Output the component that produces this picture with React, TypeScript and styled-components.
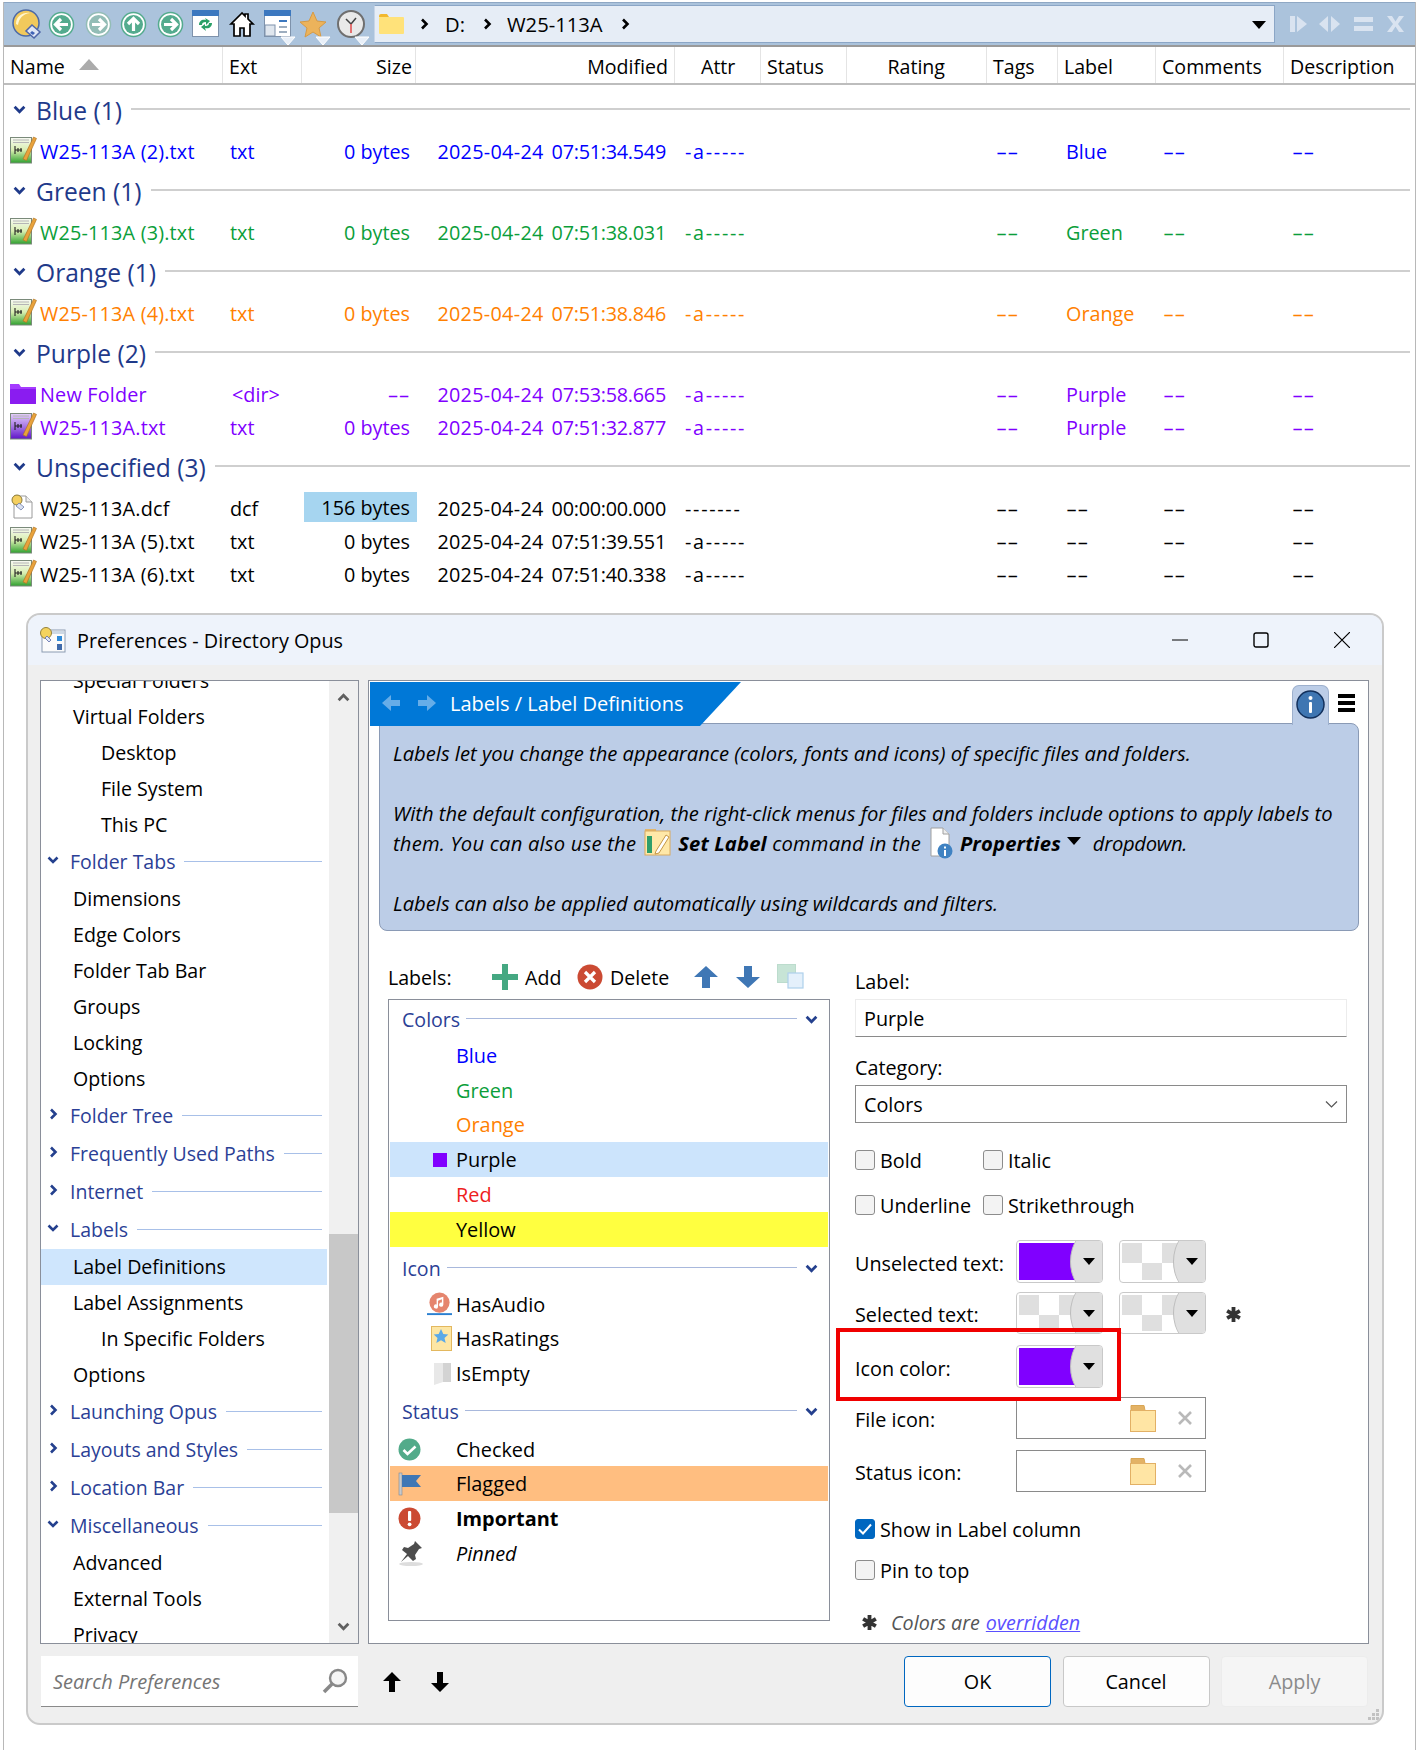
import React from "react";
import styled, { createGlobalStyle } from "styled-components";

const FONT = `"Open Sans", "Noto Sans", sans-serif`;

const Global = createGlobalStyle`
  html, body { margin: 0; padding: 0; background: #fff; }
  * { box-sizing: border-box; }
  body { font-family: ${FONT}; font-size: 19.8px; color: #000; }
`;

const COLS = "219px 79px 114px 259px 86px 86px 140px 71px 98px 128px 131px";

const Page = styled.div`
  width: 1421px;
  height: 1750px;
  padding: 2px 5px 0 3px;
  background: #fff;
`;
const Lister = styled.div`
  height: 1748px;
  border-left: 1px solid #b8b8b8;
  border-right: 1px solid #b8b8b8;
`;
const Toolbar = styled.div`
  height: 45px;
  background: #abc3dc;
  border-top: 1px solid #8fa8c4;
  border-bottom: 2px solid #9a9a9a;
  display: flex;
  align-items: center;
`;
const ToolIcons = styled.div`
  width: 370px;
  height: 100%;
  flex: none;
`;
const ArtSvg = styled.svg`
  display: block;
`;
const PathBox = styled.div`
  width: 901px;
  height: 38px;
  flex: none;
  background: #e6edf6;
  border: 1px solid #8ba6c6;
  border-left-color: #c8d6e8;
  display: flex;
  align-items: center;
  padding-left: 4px;
  position: relative;
`;
const PathText = styled.span`
  font-size: 20.2px;
  line-height: 1;
`;
const PathChevron = styled.span<{ $l: number; $r: number }>`
  display: flex;
  align-items: center;
  margin: 0 ${(p) => p.$r}px 0 ${(p) => p.$l}px;
`;
const PathDrop = styled.span`
  position: absolute;
  right: 8px;
  top: 15px;
  width: 0;
  height: 0;
  border-left: 7px solid transparent;
  border-right: 7px solid transparent;
  border-top: 8px solid #000;
`;
const WinIcons = styled.div`
  flex: 1;
  display: flex;
  justify-content: center;
`;

const HeaderRow = styled.div`
  height: 38px;
  display: grid;
  grid-template-columns: ${COLS};
  border-bottom: 2px solid #bdbdbd;
  font-size: 19.6px;
`;
const HeaderCell = styled.div<{ $right?: boolean; $noSep?: boolean; $pl?: number; $pr?: number }>`
  display: flex;
  align-items: center;
  justify-content: ${(p) => (p.$right ? "flex-end" : "flex-start")};
  padding: 3px ${(p) => p.$pr ?? 6}px 0 ${(p) => p.$pl ?? 6}px;
  border-right: ${(p) => (p.$noSep ? "none" : "1px solid #e4e4e4")};
  white-space: nowrap;
`;
const SortArrow = styled.span`
  margin-left: 14px;
  margin-top: -5px;
  width: 0;
  height: 0;
  border-left: 10px solid transparent;
  border-right: 10px solid transparent;
  border-bottom: 11px solid #ababab;
`;
const FileList = styled.div`
  padding-top: 3px;
`;
const GroupRow = styled.div`
  height: 48px;
  display: flex;
  align-items: center;
  padding: 0 5px 4px 9px;
  color: #1f3a8a;
  font-size: 24.6px;
  white-space: nowrap;
`;
const GroupLine = styled.span`
  flex: 1;
  height: 2px;
  background: #cfcfcf;
  margin: -2px 0 0 9px;
`;
const GroupChevron = styled.span`
  width: 20px;
  display: flex;
  align-items: center;
  margin-top: -2px;
  margin-right: 3px;
`;
const FileRow = styled.div<{ $color: string }>`
  height: 33px;
  display: grid;
  grid-template-columns: ${COLS};
  color: ${(p) => p.$color};
  font-size: 19.8px;
  white-space: nowrap;
  align-items: stretch;
`;
const FileCell = styled.div<{ $right?: boolean; $pad?: number; $pr?: number; $hl?: boolean; $track?: number }>`
  display: flex;
  align-items: center;
  justify-content: ${(p) => (p.$right ? "flex-end" : "flex-start")};
  padding: 0 ${(p) => p.$pr ?? (p.$right ? 6 : 0)}px 2px ${(p) => p.$pad ?? 0}px;
  letter-spacing: ${(p) => p.$track ?? 0}px;
  ${(p) => (p.$hl ? "background: #a6d5f0; margin: -1px -1px 4px 2px; padding-bottom: 0; padding-right: 7px; color: #000;" : "")}
`;
const NameIcon = styled.span`
  width: 36px;
  padding-left: 6px;
  flex: none;
  display: flex;
  align-items: center;
  margin-top: -3px;
`;
const NameText = styled.span`
  letter-spacing: 0.2px;
`;
const DateText = styled.span`
  letter-spacing: 0.3px;
`;
const Time = styled.span`
  margin-left: 8px;
  letter-spacing: -0.25px;
`;
const Dash = styled.span<{ $right?: boolean }>`
  display: inline-block;
  transform: scaleX(1.75);
  transform-origin: ${(p) => (p.$right ? "right" : "left")} center;
`;

/* Dialog */
const Dialog = styled.div`
  width: 1358px;
  height: 1112px;
  margin: 21px 0 0 22px;
  border: 2px solid #cacaca;
  border-radius: 14px;
  background: #efefef;
  overflow: hidden;
  position: relative;
`;
const TitleBar = styled.div`
  height: 50px;
  background: #eef3fb;
  display: flex;
  align-items: center;
  padding-left: 11px;
`;
const TitleText = styled.span`
  margin-left: 11px;
  font-size: 19.8px;
`;
const WinButtons = styled.div`
  margin-left: auto;
  display: flex;
  width: 243px;
`;
const WinButton = styled.span`
  width: 81px;
  display: flex;
  justify-content: center;
`;
const Body = styled.div`
  display: flex;
  padding: 15px 13px 0 12px;
  gap: 9px;
  height: 979px;
`;
const TreePanel = styled.div`
  width: 319px;
  height: 964px;
  background: #fff;
  border: 1px solid #8a8f9a;
  display: flex;
  overflow: hidden;
`;
const TreeList = styled.div`
  flex: 1;
  margin: -18px 2px 0 0;
`;
const TreeItem = styled.div<{ $level: number; $sel?: boolean }>`
  height: 36px;
  display: flex;
  align-items: center;
  padding-left: ${(p) => (p.$level === 2 ? 60 : 32)}px;
  padding-bottom: 2px;
  font-size: 19.6px;
  white-space: nowrap;
  background: ${(p) => (p.$sel ? "#cfe6fd" : "transparent")};
`;
const TreeGroup = styled.div`
  height: 38px;
  display: flex;
  align-items: center;
  padding: 0 5px 2px 6px;
  color: #2b3f96;
  font-size: 19.5px;
  white-space: nowrap;
`;
const TreeChevron = styled.span`
  width: 23px;
  display: flex;
  flex: none;
  margin-top: -2px;
`;
const TreeLine = styled.span`
  flex: 1;
  height: 1px;
  background: #a8c0e8;
  margin: 0 0 0 9px;
`;
const ScrollBar = styled.div`
  width: 29px;
  flex: none;
  background: #f0f0f0;
  display: flex;
  flex-direction: column;
  align-items: center;
`;
const ScrollArrow = styled.div`
  height: 33px;
  flex: none;
  display: flex;
  align-items: center;
  justify-content: center;
`;
const ScrollTrack = styled.div`
  flex: 1;
  width: 100%;
  padding-top: 520px;
`;
const ScrollThumb = styled.div`
  height: 279px;
  background: #c8c8c8;
`;

const Main = styled.div`
  width: 1001px;
  height: 964px;
  background: #fff;
  border: 1px solid #8a8f9a;
`;
const TabRow = styled.div`
  height: 42px;
  display: flex;
  position: relative;
`;
const BlueTab = styled.div`
  width: 371px;
  height: 44px;
  margin: 1px 0 0 1px;
  background: #0078d7;
  clip-path: polygon(0 0, 100% 0, 330px 100%, 0 100%);
  color: #fff;
  display: flex;
  align-items: center;
  gap: 16px;
  padding: 0 0 2px 11px;
  font-size: 20px;
  position: relative;
  z-index: 1;
`;
const TabTitle = styled.span`
  margin-left: -3px;
`;
const InfoTab = styled.div`
  position: absolute;
  left: 923px;
  top: 4px;
  width: 37px;
  height: 40px;
  background: #bccde7;
  border: 1px solid #9db0cd;
  border-bottom: none;
  border-radius: 7px 7px 0 0;
  display: flex;
  justify-content: center;
  padding-top: 4px;
  z-index: 2;
`;
const MenuIcon = styled.div`
  position: absolute;
  left: 969px;
  top: 13px;
  width: 17px;
  height: 18px;
  border-top: 4px solid #000;
  border-bottom: 4px solid #000;
  display: flex;
  align-items: center;
  &::before {
    content: "";
    width: 100%;
    height: 4px;
    background: #000;
  }
`;
const InfoPanel = styled.div`
  height: 208px;
  margin: 0 9px 0 10px;
  padding: 14px 12px 0 13px;
  background: #bccde7;
  border: 1px solid #8a9ab5;
  border-radius: 0 8px 8px 8px;
  font-style: italic;
  font-size: 20.2px;
  line-height: 30px;
  white-space: nowrap;
`;
const InfoLine = styled.div<{ $gap?: boolean }>`
  height: 30px;
  margin-top: ${(p) => (p.$gap ? 30 : 0)}px;
  display: flex;
  align-items: center;
`;
const InlineIcon = styled.span`
  display: inline-flex;
  margin: 0 7px 0 8px;
`;
const Strong = styled.b`
  font-weight: 700;
  white-space: pre;
  letter-spacing: 0.15px;
`;
const Spaced = styled.span<{ $track?: number }>`
  white-space: pre;
  letter-spacing: ${(p) => p.$track ?? 0.2}px;
`;
const DropMark = styled.span`
  margin: -4px 12px 0 6px;
  width: 0;
  height: 0;
  border-left: 7px solid transparent;
  border-right: 7px solid transparent;
  border-top: 8px solid #000;
`;
const Content = styled.div`
  display: flex;
  padding-left: 19px;
  position: relative;
`;
const LeftCol = styled.div`
  width: 442px;
  flex: none;
  padding-top: 28px;
`;
const LabelsBar = styled.div`
  height: 40px;
  display: flex;
  align-items: center;
  font-size: 19.6px;
  padding-bottom: 4px;
`;
const BarAction = styled.span<{ $w: number }>`
  width: ${(p) => p.$w}px;
  flex: none;
  display: flex;
  align-items: center;
`;
const ActionIcon = styled.span<{ $mr?: number }>`
  display: flex;
  margin-right: ${(p) => p.$mr ?? 7}px;
`;
const LabelBox = styled.div`
  height: 622px;
  border: 1px solid #8a8f9a;
  background: #fff;
  padding: 0 1px;
`;
const LGroup = styled.div<{ $h: number; $pt?: number }>`
  height: ${(p) => p.$h}px;
  display: flex;
  align-items: center;
  padding: ${(p) => p.$pt ?? 0}px 10px 0 12px;
  color: #2b3f96;
  font-size: 19.6px;
`;
const LGroupLine = styled.span`
  flex: 1;
  height: 1px;
  background: #a8b8dc;
  margin: -2px 8px 0 6px;
`;
const LRow = styled.div<{ $bg?: string; $color?: string; $weight?: number; $italic?: boolean }>`
  height: 34.8px;
  display: flex;
  align-items: center;
  background: ${(p) => p.$bg ?? "transparent"};
  color: ${(p) => p.$color ?? "#000"};
  font-weight: ${(p) => p.$weight ?? 400};
  font-style: ${(p) => (p.$italic ? "italic" : "normal")};
  font-size: 19.9px;
`;
const LIcon = styled.span`
  width: 66px;
  flex: none;
  display: flex;
  align-items: center;
`;
const SquareMark = styled.span`
  width: 14px;
  height: 14px;
  margin-left: 43px;
  background: #8000ff;
`;
const SpacerIcon = styled.span`
  width: 66px;
  padding-right: 4px;
  display: flex;
  justify-content: flex-end;
`;
const StatusSlot = styled.span`
  padding-left: 8px;
  display: flex;
`;
const RightCol = styled.div`
  width: 492px;
  flex: none;
  margin-left: 25px;
  padding-top: 35px;
  position: relative;
`;
const Caption = styled.div<{ $mt?: number }>`
  height: 30px;
  margin-top: ${(p) => p.$mt ?? 0}px;
  display: flex;
  align-items: center;
  font-size: 19.8px;
`;
const TextInput = styled.div`
  height: 38px;
  margin-top: 3px;
  background: #fff;
  border: 1px solid #ececec;
  border-bottom: 1px solid #8a8a8a;
  display: flex;
  align-items: center;
  padding-left: 8px;
  font-size: 19.8px;
`;
const SelectBox = styled.div`
  height: 38px;
  margin-top: 3px;
  background: #fff;
  border: 1px solid #8a8a8a;
  display: flex;
  align-items: center;
  justify-content: space-between;
  padding: 0 8px;
  font-size: 19.8px;
`;
const CheckRow = styled.div<{ $mt: number }>`
  height: 30px;
  margin-top: ${(p) => p.$mt}px;
  display: flex;
  align-items: center;
  font-size: 19.8px;
`;
const CheckItem = styled.label<{ $w?: number }>`
  width: ${(p) => (p.$w ? `${p.$w}px` : "auto")};
  display: flex;
  align-items: center;
`;
const CheckText = styled.span`
  padding-top: 1px;
`;
const Box = styled.span<{ $on?: boolean }>`
  width: 20px;
  height: 20px;
  margin-right: 5px;
  flex: none;
  border-radius: 3px;
  border: 1px solid ${(p) => (p.$on ? "#0067c0" : "#8c8c8c")};
  background: ${(p) => (p.$on ? "#0067c0" : "#f3f3f3")};
  display: flex;
  align-items: center;
  justify-content: center;
`;
const FormRow = styled.div<{ $mt: number; $h: number }>`
  height: ${(p) => p.$h}px;
  margin-top: ${(p) => p.$mt}px;
  display: flex;
  align-items: center;
  font-size: 19.8px;
`;
const FormLabel = styled.span`
  width: 161px;
  flex: none;
  padding-top: 3px;
`;
const Swatch = styled.span`
  width: 87px;
  height: 100%;
  flex: none;
  margin-right: 16px;
  padding: 2px;
  background: #fff;
  border: 1px solid #c9c9c9;
  border-radius: 4px;
  position: relative;
  overflow: hidden;
  display: block;
`;
const SwatchFill = styled.span<{ $color?: string }>`
  display: block;
  width: 100%;
  height: 100%;
  background: ${(p) =>
    p.$color ??
    "repeating-conic-gradient(#dfdfdf 0 25%, #fff 0 50%) 20px 0 / 40px 40px"};
`;
const SwatchDrop = styled.span`
  position: absolute;
  right: -16px;
  top: -12px;
  bottom: -12px;
  width: 48px;
  background: #e0e0e0;
  border-left: 1px solid #bdbdbd;
  border-radius: 50%;
  display: flex;
  align-items: center;
  padding-left: 12px;
  &::after {
    content: "";
    width: 0;
    height: 0;
    border-left: 6.5px solid transparent;
    border-right: 6.5px solid transparent;
    border-top: 7px solid #000;
  }
`;
const Star = styled.span`
  display: flex;
  padding: 3px 0 0 3px;
`;
const IconField = styled.span`
  width: 190px;
  height: 100%;
  border: 1px solid #8a8a8a;
  background: #fff;
  display: flex;
  align-items: center;
  justify-content: flex-end;
  padding-right: 13px;
  gap: 22px;
`;
const Note = styled.div`
  height: 30px;
  margin-top: 22px;
  display: flex;
  align-items: center;
  font-size: 19.7px;
  font-style: italic;
  color: #555;
  padding-left: 6px;
`;
const NoteLink = styled.a`
  color: #5a50ff;
  text-decoration: underline;
  margin-left: 6px;
`;
const NoteStar = styled.span`
  display: flex;
  margin-right: 13px;
`;
const RedBox = styled.div`
  position: absolute;
  left: -19px;
  top: 397px;
  width: 285px;
  height: 73px;
  border: 4px solid #f00000;
  pointer-events: none;
`;
const Footer = styled.div`
  display: flex;
  align-items: stretch;
  height: 51px;
  margin-top: 12px;
  padding: 0 14px 0 13px;
`;
const SearchBox = styled.div`
  width: 317px;
  background: #fff;
  border-bottom: 1px solid #8a8a8a;
  display: flex;
  align-items: center;
  justify-content: space-between;
  padding: 0 10px 0 12px;
  font-style: italic;
  color: #757575;
  font-size: 20px;
`;
const FootArrows = styled.div`
  display: flex;
  align-items: center;
  gap: 30px;
  margin-left: 25px;
`;
const Buttons = styled.div`
  margin-left: auto;
  display: flex;
  gap: 11.5px;
`;
const Button = styled.button<{ $kind?: "primary" | "disabled" }>`
  width: 147px;
  height: 51px;
  font-family: ${FONT};
  font-size: 19.8px;
  border-radius: 4px;
  background: ${(p) => (p.$kind === "disabled" ? "#f5f5f5" : "#fdfdfd")};
  color: ${(p) => (p.$kind === "disabled" ? "#8a8a8a" : "#000")};
  border: 1px solid
    ${(p) =>
      p.$kind === "primary" ? "#0067c0" : p.$kind === "disabled" ? "#ececec" : "#c8c8c8"};
`;
const Grip = styled.span`
  position: absolute;
  right: 1px;
  bottom: 1px;
  display: flex;
`;

/* ---------- drawings ---------- */
const Chev = ({ color = "#1f3a8a", size = 13, dir = "down" }: { color?: string; size?: number; dir?: "down" | "right" | "up" }) => (
  <svg width={size} height={size} viewBox="0 0 12 12">
    <path
      d={dir === "down" ? "M1.5 3.5 6 8 10.5 3.5" : dir === "up" ? "M1.5 8.5 6 4 10.5 8.5" : "M4 1.5 8.5 6 4 10.5"}
      fill="none"
      stroke={color}
      strokeWidth="2.6"
    />
  </svg>
);

const NavCircle = ({ x, dir, faded }: { x: number; dir: "l" | "r" | "u"; faded?: boolean }) => {
  const c = faded ? "#93bdb6" : "#54ab8e";
  const a =
    dir === "l"
      ? "M19 12.5H7M12 7l-5.5 5.5L12 18"
      : dir === "r"
      ? "M6 12.5h12M13 7l5.5 5.5L13 18"
      : "M12.5 19V7M7 12l5.5-5.5L18 12";
  return (
    <g transform={`translate(${x} 9)`}>
      <circle cx="12.5" cy="12.5" r="12" fill="#fff" stroke={c} strokeWidth="1.5" />
      <circle cx="12.5" cy="12.5" r="9.5" fill={c} />
      <path d={a} fill="none" stroke="#fff" strokeWidth="3.2" />
    </g>
  );
};
const Tri = ({ x }: { x: number }) => <path d={`M${x - 7} 34h14l-7 8z`} fill="#e8eff8" stroke="#fff" strokeWidth="1" />;

const ToolbarArt = () => (
  <ArtSvg width="370" height="44" viewBox="0 0 370 44">
    <g transform="translate(9 7)">
      <circle cx="13" cy="13" r="13" fill="#f1c95c" stroke="#4d6aa5" strokeWidth="1.5" />
      <path d="M3 14C3 6 10 2 17 3c-7 1-11 5-12 12z" fill="#fff6cf" />
      <path d="M19 15l8 7-6 6-8-7z" fill="#dfe6f5" stroke="#4f66a8" strokeWidth="1.5" />
      <path d="M19 21l3 2-2 2-3-2z" fill="#3f62b5" />
    </g>
    <NavCircle x={45} dir="l" />
    <NavCircle x={82} dir="r" faded />
    <NavCircle x={117} dir="u" />
    <NavCircle x={154} dir="r" />
    <g transform="translate(188 7)">
      <rect x=".5" y=".5" width="26" height="26" fill="#fff" stroke="#7e92ab" />
      <rect x="0" y="0" width="27" height="6" fill="#3c78bf" />
      <path d="M7 15c0-4 3-6 7-5l-1-2 5 3-4 4v-3c-3 0-4 1-4 3z" fill="#2ba068" />
      <path d="M20 13c0 4-3 6-7 5l1 3-5-4 4-3v2c3 0 4-1 4-3z" fill="#2ba068" />
    </g>
    <g transform="translate(226 8)" fill="#fff" stroke="#000" strokeWidth="1.7">
      <path d="M12 2 1 13h3v12h6v-8h4v8h6V13h3l-5-5V3h-3v2z" />
    </g>
    <g transform="translate(260 7)">
      <rect x=".5" y=".5" width="26" height="26" fill="#fff" stroke="#7e92ab" />
      <rect x="0" y="0" width="27" height="6" fill="#3c78bf" />
      <rect x="1" y="15" width="10" height="11" fill="#dfe6ee" stroke="#7e92ab" />
      <path d="M15 11h8" stroke="#3c78bf" strokeWidth="2" />
      <path d="M15 17h8M15 22h8" stroke="#7e92ab" strokeWidth="1.5" />
    </g>
    <Tri x={284} />
    <path d="M309 9l4 9 9 1-7 6 2 9-8-5-8 5 2-9-7-6 9-1z" fill="#ecb35b" stroke="#d69a44" />
    <Tri x={319} />
    <g transform="translate(334 7)">
      <circle cx="13" cy="14" r="13" fill="#e9e9e9" stroke="#6f6f6f" strokeWidth="2" />
      <path d="M13 14 8 9M13 14l5-6" stroke="#444" strokeWidth="1.5" fill="none" />
      <path d="M13 14v9" stroke="#e04848" strokeWidth="1.5" />
    </g>
    <Tri x={358} />
  </ArtSvg>
);

const WinArt = () => (
  <ArtSvg width="125" height="20" viewBox="0 0 125 20">
    <g fill="#d9e3f0">
      <rect x="7" y="2" width="5" height="16" />
      <path d="M14 2l10 8-10 8z" />
      <path d="M36 10l9-8v16zM48 2l9 8-9 8z" />
      <rect x="71" y="3" width="19" height="5" />
      <rect x="71" y="12" width="19" height="5" />
      <path d="M104 2h5l3.5 5.5L116 2h5l-6 8 6 8h-5l-3.500-5.500L109 18h-5l6-8z" />
    </g>
  </ArtSvg>
);

const PathFolder = () => (
  <svg width="25" height="20" viewBox="0 0 25 20">
    <path d="M0 2q0-2 2-2h6l2 3H0z" fill="#f2b82e" />
    <rect x="0" y="3" width="25" height="17" rx="1" fill="#ffe27a" />
  </svg>
);

const TextFileIcon = ({ purple }: { purple?: boolean }) => (
  <svg width="27" height="28" viewBox="0 0 27 28">
    <defs>
      <linearGradient id={purple ? "fp" : "fg"} x1="0" y1="0" x2="0" y2="1">
        <stop offset="0" stopColor={purple ? "#e4d0fa" : "#f8faf4"} />
        <stop offset=".5" stopColor={purple ? "#a878e6" : "#d8eeb0"} />
        <stop offset="1" stopColor={purple ? "#5e14c8" : "#2fa02f"} />
      </linearGradient>
    </defs>
    <rect x=".5" y="1.500" width="21" height="25.500" fill={`url(#${purple ? "fp" : "fg"})`} stroke="#7a8a7a" />
    <path d="M3 4h16M3 6.500h16" stroke="#b5b5b5" strokeWidth="1" />
    <path d="M5 10v8M5 14h7M8 12v4M11 12v4" stroke="#222" strokeWidth="1.100" fill="none" />
    <path d="M13 23 23.500 1l3 1.400L16.500 24.500z" fill="#e8a23c" stroke="#a96d1c" strokeWidth=".6" />
  </svg>
);
const PurpleFolder = () => (
  <svg width="26" height="21" viewBox="0 0 26 21">
    <path d="M0 1h9l2 3h15v17H0z" fill="#a53bff" />
    <rect x="0" y="6" width="26" height="15" rx="1" fill="#8a1cf0" />
  </svg>
);
const DcfIcon = () => (
  <svg width="25" height="26" viewBox="0 0 25 26">
    <path d="M4 2h12l6 6v16H4z" fill="#fff" stroke="#9a9a9a" />
    <path d="M16 2v6h6" fill="#eee" stroke="#9a9a9a" />
    <circle cx="7" cy="6" r="5" fill="#f4cf60" stroke="#8a7a3a" />
    <path d="M9 9l5 4-3 3-5-4z" fill="#d8e0f0" stroke="#6070a0" strokeWidth=".7" />
  </svg>
);
const PrefIcon = () => (
  <svg width="27" height="26" viewBox="0 0 27 26">
    <rect x="3" y="3" width="23" height="22" fill="#fbfbfb" stroke="#8b9cb2" />
    <rect x="4" y="4" width="21" height="3" fill="#cdd8e4" />
    <rect x="18" y="9" width="5" height="5" fill="#2e8ad8" />
    <rect x="18" y="17" width="5" height="6" fill="#3f6bab" />
    <circle cx="7" cy="6" r="5.500" fill="#f4d35e" stroke="#95813a" />
    <path d="M8 9l4 4-2 2-4-4z" fill="#dfe6f5" stroke="#5a6aa8" strokeWidth=".8" />
  </svg>
);
const SetLabelIcon = () => (
  <svg width="27" height="32" viewBox="0 0 27 32">
    <path d="M1 2h11v3H1z" fill="#e2b56a" />
    <rect x="1" y="4" width="25" height="24" fill="#ffe8a8" stroke="#d9aa5e" />
    <rect x="3" y="9" width="5" height="17" fill="#2f9e6b" />
    <path d="M12 24 22 8l3 2-10 16-4 1z" fill="#fff" stroke="#c59645" />
  </svg>
);
const PropsIcon = () => (
  <svg width="24" height="32" viewBox="0 0 24 32">
    <path d="M2 1h12l6 6v22H2z" fill="#fff" stroke="#a0a0a0" />
    <path d="M14 1v6h6" fill="#eee" stroke="#a0a0a0" />
    <circle cx="16" cy="24" r="7.500" fill="#3f82c2" />
    <rect x="15" y="23" width="2" height="6" fill="#fff" />
    <rect x="15" y="19.500" width="2" height="2" fill="#fff" />
  </svg>
);
const InfoBadge = () => (
  <svg width="29" height="29" viewBox="0 0 29 29">
    <circle cx="14.500" cy="14.500" r="13.500" fill="#3f76b2" stroke="#12305c" strokeWidth="1.500" />
    <rect x="13" y="12" width="3" height="11" rx="1" fill="#fff" />
    <circle cx="14.500" cy="8" r="2" fill="#fff" />
  </svg>
);
const NavArrow = ({ right }: { right?: boolean }) => (
  <svg width="20" height="20" viewBox="0 0 20 20">
    <path d={right ? "M1 7h9V2l9 8-9 8v-5H1z" : "M19 7h-9V2l-9 8 9 8v-5h9z"} fill="#66ade8" />
  </svg>
);
const PlusIcon = () => (
  <svg width="26" height="26" viewBox="0 0 26 26">
    <path d="M10 0h6v10h10v6H16v10h-6V16H0v-6h10z" fill="#45a882" />
  </svg>
);
const DeleteIcon = () => (
  <svg width="26" height="26" viewBox="0 0 26 26">
    <circle cx="13" cy="13" r="12.500" fill="#cb4a33" />
    <path d="M8 8l10 10M18 8 8 18" stroke="#fff" strokeWidth="3.200" />
  </svg>
);
const BigArrow = ({ down }: { down?: boolean }) => (
  <svg width="24" height="24" viewBox="0 0 24 24">
    <path d={down ? "M8 1h8v11h8L12 23 0 12h8z" : "M8 23h8V12h8L12 1 0 12h8z"} fill="#3f77b5" />
  </svg>
);
const CopyIcon = () => (
  <svg width="27" height="26" viewBox="0 0 27 26">
    <rect x=".5" y=".5" width="18" height="18" fill="#c7e4d6" stroke="#bcdccd" />
    <rect x="11" y="9" width="15" height="15" fill="#e4f0fb" stroke="#aed0ec" strokeWidth="1.200" />
  </svg>
);
const AudioIcon = () => (
  <svg width="25" height="25" viewBox="0 0 26 26">
    <circle cx="13" cy="11" r="10.500" fill="#e5856e" />
    <path d="M10 7l7-2v8a2.200 2.200 0 1 1-1.500-2V7.500L11.500 9v6a2.200 2.200 0 1 1-1.500-2z" fill="#fff" />
    <path d="M0 22h26v2H0z" fill="#2a7fd0" />
  </svg>
);
const RatingIcon = () => (
  <svg width="21" height="25" viewBox="0 0 21 25">
    <rect x=".5" y=".5" width="20" height="24" fill="#fde6a4" stroke="#e3b85f" />
    <path d="M10 3l2.300 5 5 .500-3.800 3.400 1.200 5L10 14.300 5.300 17l1.200-5-3.800-3.400 5-.500z" fill="#5aa9e8" />
  </svg>
);
const EmptyIcon = () => (
  <svg width="18" height="25" viewBox="0 0 18 25">
    <path d="M0 2h12l5 3v16l-5-1-12 4z" fill="#e8e8e8" />
    <path d="M9 2h8v19H9z" fill="#d3d3d3" />
  </svg>
);
const CheckedIcon = () => (
  <svg width="23" height="23" viewBox="0 0 23 23">
    <circle cx="11.500" cy="11.500" r="11" fill="#52ab8a" />
    <path d="M5.500 12l4 4 8-7.500" fill="none" stroke="#fff" strokeWidth="2.600" />
  </svg>
);
const FlagIcon = () => (
  <svg width="24" height="24" viewBox="0 0 24 24">
    <rect x="1" y="1" width="3" height="22" fill="#c9c9c9" stroke="#7c8a9a" strokeWidth=".6" />
    <path d="M4 3h19l-5 6 5 6H4z" fill="#3f77b5" />
  </svg>
);
const ImportantIcon = () => (
  <svg width="23" height="23" viewBox="0 0 23 23">
    <circle cx="11.500" cy="11.500" r="11" fill="#cb4a33" />
    <rect x="10" y="4" width="3.200" height="10" rx="1" fill="#fff" />
    <circle cx="11.600" cy="17.300" r="1.900" fill="#fff" />
  </svg>
);
const PinIcon = () => (
  <svg width="27" height="27" viewBox="0 0 27 27">
    <ellipse cx="13" cy="24" rx="12" ry="2" fill="#ddd" />
    <path d="M17 1l7 7-3 1-4 6 1 4-3 2-5-5-7 6 6-8-5-4 2-3 4 1 6-4z" fill="#4d4d4d" />
  </svg>
);
const Asterisk = ({ color = "#333", size = 17 }: { color?: string; size?: number }) => (
  <svg width={size} height={size} viewBox="0 0 16 16">
    <path d="M8 1v14M2 4.500l12 7M14 4.500l-12 7" stroke={color} strokeWidth="3.600" />
  </svg>
);
const SmallFolder = () => (
  <svg width="26" height="27" viewBox="0 0 26 27">
    <path d="M1 .5h13l1 5H1z" fill="#e3b265" stroke="#d9a655" />
    <rect x=".5" y="5.500" width="25" height="21" fill="#ffe5a4" stroke="#e2b065" />
  </svg>
);
const GreyX = () => (
  <svg width="14" height="14" viewBox="0 0 14 14">
    <path d="M1 1l12 12M13 1 1 13" stroke="#b9b9b9" strokeWidth="2.600" />
  </svg>
);
const TickMark = () => (
  <svg width="14" height="12" viewBox="0 0 14 12">
    <path d="M1 6.500 5 10.500 13 1.500" fill="none" stroke="#fff" strokeWidth="2" />
  </svg>
);
const Magnifier = () => (
  <svg width="26" height="26" viewBox="0 0 26 26">
    <circle cx="16" cy="10" r="8" fill="#f5f5f5" stroke="#888" strokeWidth="2.400" />
    <path d="M10 16 2 24" stroke="#888" strokeWidth="3.600" />
  </svg>
);
const BlackArrow = ({ down }: { down?: boolean }) => (
  <svg width="18" height="20" viewBox="0 0 18 20">
    <path d={down ? "M6 0h6v11h6l-9 9-9-9h6z" : "M6 20h6V9h6L9 0 0 9h6z"} fill="#000" />
  </svg>
);
const GripArt = () => (
  <svg width="14" height="14" viewBox="0 0 14 14" fill="#c2c2c2">
    <rect x="9" y="1" width="3" height="3" />
    <rect x="5" y="5" width="3" height="3" />
    <rect x="9" y="5" width="3" height="3" />
    <rect x="1" y="9" width="3" height="3" />
    <rect x="5" y="9" width="3" height="3" />
    <rect x="9" y="9" width="3" height="3" />
  </svg>
);

/* ---------- data ---------- */
const BLUE = "#0000ff";
const GREEN = "#0b9e3a";
const ORANGE = "#ff8000";
const PURPLE = "#8000ff";
const BLACK = "#000000";

type Kind = "txt" | "ptxt" | "pdir" | "dcf";
type File = {
  icon: Kind;
  name: string;
  ext: string;
  size: string;
  time: string;
  attr: string;
  label: string;
  hl?: boolean;
};
type Group = { title: string; color: string; files: File[] };

const D = "2025-04-24";
const GROUPS: Group[] = [
  { title: "Blue (1)", color: BLUE, files: [{ icon: "txt", name: "W25-113A (2).txt", ext: "txt", size: "0 bytes", time: "07:51:34.549", attr: "-a-----", label: "Blue" }] },
  { title: "Green (1)", color: GREEN, files: [{ icon: "txt", name: "W25-113A (3).txt", ext: "txt", size: "0 bytes", time: "07:51:38.031", attr: "-a-----", label: "Green" }] },
  { title: "Orange (1)", color: ORANGE, files: [{ icon: "txt", name: "W25-113A (4).txt", ext: "txt", size: "0 bytes", time: "07:51:38.846", attr: "-a-----", label: "Orange" }] },
  {
    title: "Purple (2)",
    color: PURPLE,
    files: [
      { icon: "pdir", name: "New Folder", ext: "<dir>", size: "--", time: "07:53:58.665", attr: "-a-----", label: "Purple" },
      { icon: "ptxt", name: "W25-113A.txt", ext: "txt", size: "0 bytes", time: "07:51:32.877", attr: "-a-----", label: "Purple" },
    ],
  },
  {
    title: "Unspecified (3)",
    color: BLACK,
    files: [
      { icon: "dcf", name: "W25-113A.dcf", ext: "dcf", size: "156 bytes", time: "00:00:00.000", attr: "-------", label: "--", hl: true },
      { icon: "txt", name: "W25-113A (5).txt", ext: "txt", size: "0 bytes", time: "07:51:39.551", attr: "-a-----", label: "--" },
      { icon: "txt", name: "W25-113A (6).txt", ext: "txt", size: "0 bytes", time: "07:51:40.338", attr: "-a-----", label: "--" },
    ],
  },
];

const HEADERS: { t: string; right?: boolean; pl?: number; pr?: number }[] = [
  { t: "Name" },
  { t: "Ext" },
  { t: "Size", right: true, pr: 3 },
  { t: "Modified", right: true },
  { t: "Attr", pl: 26 },
  { t: "Status" },
  { t: "Rating", right: true, pr: 41 },
  { t: "Tags" },
  { t: "Label" },
  { t: "Comments" },
  { t: "Description" },
];

type TreeEntry = { t: string; lvl?: number; sel?: boolean; group?: "open" | "closed" };
const TREE: TreeEntry[] = [
  { t: "Special Folders", lvl: 1 },
  { t: "Virtual Folders", lvl: 1 },
  { t: "Desktop", lvl: 2 },
  { t: "File System", lvl: 2 },
  { t: "This PC", lvl: 2 },
  { t: "Folder Tabs", group: "open" },
  { t: "Dimensions", lvl: 1 },
  { t: "Edge Colors", lvl: 1 },
  { t: "Folder Tab Bar", lvl: 1 },
  { t: "Groups", lvl: 1 },
  { t: "Locking", lvl: 1 },
  { t: "Options", lvl: 1 },
  { t: "Folder Tree", group: "closed" },
  { t: "Frequently Used Paths", group: "closed" },
  { t: "Internet", group: "closed" },
  { t: "Labels", group: "open" },
  { t: "Label Definitions", lvl: 1, sel: true },
  { t: "Label Assignments", lvl: 1 },
  { t: "In Specific Folders", lvl: 2 },
  { t: "Options", lvl: 1 },
  { t: "Launching Opus", group: "closed" },
  { t: "Layouts and Styles", group: "closed" },
  { t: "Location Bar", group: "closed" },
  { t: "Miscellaneous", group: "open" },
  { t: "Advanced", lvl: 1 },
  { t: "External Tools", lvl: 1 },
  { t: "Privacy", lvl: 1 },
];

const fileIcon = (k: Kind) =>
  k === "txt" ? <TextFileIcon /> : k === "ptxt" ? <TextFileIcon purple /> : k === "pdir" ? <PurpleFolder /> : <DcfIcon />;

export default function App() {
  return (
    <Page>
      <Global />
      <Lister>
        <Toolbar>
          <ToolIcons>
            <ToolbarArt />
          </ToolIcons>
          <PathBox>
            <PathFolder />
            <PathChevron $l={14} $r={15}>
              <Chev color="#000" size={12} dir="right" />
            </PathChevron>
            <PathText>D:</PathText>
            <PathChevron $l={16} $r={14}>
              <Chev color="#000" size={12} dir="right" />
            </PathChevron>
            <PathText>W25-113A</PathText>
            <PathChevron $l={16} $r={0}>
              <Chev color="#000" size={12} dir="right" />
            </PathChevron>
            <PathDrop />
          </PathBox>
          <WinIcons>
            <WinArt />
          </WinIcons>
        </Toolbar>
        <HeaderRow>
          {HEADERS.map((h, i) => (
            <HeaderCell key={h.t} $right={h.right} $pl={h.pl} $pr={h.pr} $noSep={i === HEADERS.length - 1}>
              {h.t}
              {i === 0 && <SortArrow />}
            </HeaderCell>
          ))}
        </HeaderRow>
        <FileList>
          {GROUPS.map((g) => (
            <React.Fragment key={g.title}>
              <GroupRow>
                <GroupChevron>
                  <Chev />
                </GroupChevron>
                {g.title}
                <GroupLine />
              </GroupRow>
              {g.files.map((f) => (
                <FileRow key={f.name} $color={g.color}>
                  <FileCell>
                    <NameIcon>{fileIcon(f.icon)}</NameIcon>
                    <NameText>{f.name}</NameText>
                  </FileCell>
                  <FileCell $pad={f.ext === "<dir>" ? 9 : 7}>{f.ext}</FileCell>
                  <FileCell $right $hl={f.hl}>
                    {f.size === "--" ? <Dash $right>--</Dash> : f.size}
                  </FileCell>
                  <FileCell $right $pr={9}>
                    <DateText>{D}</DateText>
                    <Time>{f.time}</Time>
                  </FileCell>
                  <FileCell $pad={10} $track={1.7}>{f.attr}</FileCell>
                  <FileCell />
                  <FileCell />
                  <FileCell $pad={9}><Dash>--</Dash></FileCell>
                  <FileCell $pad={8}>{f.label === "--" ? <Dash>--</Dash> : f.label}</FileCell>
                  <FileCell $pad={7}><Dash>--</Dash></FileCell>
                  <FileCell $pad={8}><Dash>--</Dash></FileCell>
                </FileRow>
              ))}
            </React.Fragment>
          ))}
        </FileList>
        <Dialog>
          <TitleBar>
            <PrefIcon />
            <TitleText>Preferences - Directory Opus</TitleText>
            <WinButtons>
              <WinButton>
                <svg width="16" height="16" viewBox="0 0 16 16"><path d="M0 8h16" stroke="#000" /></svg>
              </WinButton>
              <WinButton>
                <svg width="16" height="16" viewBox="0 0 16 16"><rect x="1" y="1" width="14" height="14" rx="2" fill="none" stroke="#000" strokeWidth="1.400" /></svg>
              </WinButton>
              <WinButton>
                <svg width="16" height="16" viewBox="0 0 16 16"><path d="M0 0l16 16M16 0 0 16" stroke="#000" strokeWidth="1.200" /></svg>
              </WinButton>
            </WinButtons>
          </TitleBar>
          <Body>
            <TreePanel>
              <TreeList>
                {TREE.map((e, i) =>
                  e.group ? (
                    <TreeGroup key={i}>
                      <TreeChevron>
                        <Chev color="#24408e" size={12} dir={e.group === "open" ? "down" : "right"} />
                      </TreeChevron>
                      {e.t}
                      <TreeLine />
                    </TreeGroup>
                  ) : (
                    <TreeItem key={i} $level={e.lvl ?? 1} $sel={e.sel}>
                      {e.t}
                    </TreeItem>
                  )
                )}
              </TreeList>
              <ScrollBar>
                <ScrollArrow>
                  <Chev color="#606060" size={13} dir="up" />
                </ScrollArrow>
                <ScrollTrack>
                  <ScrollThumb />
                </ScrollTrack>
                <ScrollArrow>
                  <Chev color="#606060" size={13} />
                </ScrollArrow>
              </ScrollBar>
            </TreePanel>
            <Main>
              <TabRow>
                <BlueTab>
                  <NavArrow />
                  <NavArrow right />
                  <TabTitle>Labels / Label Definitions</TabTitle>
                </BlueTab>
                <InfoTab>
                  <InfoBadge />
                </InfoTab>
                <MenuIcon />
              </TabRow>
              <InfoPanel>
                <InfoLine>Labels let you change the appearance (colors, fonts and icons) of specific files and folders.</InfoLine>
                <InfoLine $gap>With the default configuration, the right-click menus for files and folders include options to apply labels to</InfoLine>
                <InfoLine>
                  <Spaced>them. You can also use the</Spaced>
                  <InlineIcon><SetLabelIcon /></InlineIcon>
                  <Strong>Set Label</Strong>
                  <Spaced> command in the</Spaced>
                  <InlineIcon><PropsIcon /></InlineIcon>
                  <Strong>Properties</Strong>
                  <DropMark />
                  <Spaced $track={-0.3}>dropdown.</Spaced>
                </InfoLine>
                <InfoLine $gap>Labels can also be applied automatically using wildcards and filters.</InfoLine>
              </InfoPanel>
              <Content>
                <LeftCol>
                  <LabelsBar>
                    <BarAction $w={104}>Labels:</BarAction>
                    <BarAction $w={85}>
                      <ActionIcon><PlusIcon /></ActionIcon>Add
                    </BarAction>
                    <BarAction $w={117}>
                      <ActionIcon><DeleteIcon /></ActionIcon>Delete
                    </BarAction>
                    <BarAction $w={42}><BigArrow /></BarAction>
                    <BarAction $w={41}><BigArrow down /></BarAction>
                    <BarAction $w={30}><CopyIcon /></BarAction>
                  </LabelsBar>
                  <LabelBox>
                    <LGroup $h={38}>Colors<LGroupLine /><Chev color="#24408e" size={13} /></LGroup>
                    <LRow $color={BLUE}><LIcon />Blue</LRow>
                    <LRow $color={GREEN}><LIcon />Green</LRow>
                    <LRow $color={ORANGE}><LIcon />Orange</LRow>
                    <LRow $bg="#cce4fc"><LIcon><SquareMark /></LIcon>Purple</LRow>
                    <LRow $color="#ee2020"><LIcon />Red</LRow>
                    <LRow $bg="#ffff40"><LIcon />Yellow</LRow>
                    <LGroup $h={40} $pt={3}>Icon<LGroupLine /><Chev color="#24408e" size={13} /></LGroup>
                    <LRow><LIcon><SpacerIcon><AudioIcon /></SpacerIcon></LIcon>HasAudio</LRow>
                    <LRow><LIcon><SpacerIcon><RatingIcon /></SpacerIcon></LIcon>HasRatings</LRow>
                    <LRow><LIcon><SpacerIcon><EmptyIcon /></SpacerIcon></LIcon>IsEmpty</LRow>
                    <LGroup $h={40.5}>Status<LGroupLine /><Chev color="#24408e" size={13} /></LGroup>
                    <LRow><LIcon><StatusSlot><CheckedIcon /></StatusSlot></LIcon>Checked</LRow>
                    <LRow $bg="#ffbe80"><LIcon><StatusSlot><FlagIcon /></StatusSlot></LIcon>Flagged</LRow>
                    <LRow $weight={700}><LIcon><StatusSlot><ImportantIcon /></StatusSlot></LIcon>Important</LRow>
                    <LRow $italic><LIcon><StatusSlot><PinIcon /></StatusSlot></LIcon>Pinned</LRow>
                  </LabelBox>
                </LeftCol>
                <RightCol>
                  <Caption>Label:</Caption>
                  <TextInput>Purple</TextInput>
                  <Caption $mt={15}>Category:</Caption>
                  <SelectBox>
                    Colors
                    <svg width="13" height="9" viewBox="0 0 13 9"><path d="M1 1.500 6.500 7 12 1.500" fill="none" stroke="#555" strokeWidth="1.200" /></svg>
                  </SelectBox>
                  <CheckRow $mt={22}>
                    <CheckItem $w={128}><Box /><CheckText>Bold</CheckText></CheckItem>
                    <CheckItem><Box /><CheckText>Italic</CheckText></CheckItem>
                  </CheckRow>
                  <CheckRow $mt={15}>
                    <CheckItem $w={128}><Box /><CheckText>Underline</CheckText></CheckItem>
                    <CheckItem><Box /><CheckText>Strikethrough</CheckText></CheckItem>
                  </CheckRow>
                  <FormRow $mt={20} $h={43}>
                    <FormLabel>Unselected text:</FormLabel>
                    <Swatch><SwatchFill $color={PURPLE} /><SwatchDrop /></Swatch>
                    <Swatch><SwatchFill /><SwatchDrop /></Swatch>
                  </FormRow>
                  <FormRow $mt={9} $h={42}>
                    <FormLabel>Selected text:</FormLabel>
                    <Swatch><SwatchFill /><SwatchDrop /></Swatch>
                    <Swatch><SwatchFill /><SwatchDrop /></Swatch>
                    <Star><Asterisk /></Star>
                  </FormRow>
                  <FormRow $mt={11} $h={43}>
                    <FormLabel>Icon color:</FormLabel>
                    <Swatch><SwatchFill $color={PURPLE} /><SwatchDrop /></Swatch>
                  </FormRow>
                  <FormRow $mt={9} $h={42}>
                    <FormLabel>File icon:</FormLabel>
                    <IconField><SmallFolder /><GreyX /></IconField>
                  </FormRow>
                  <FormRow $mt={11} $h={42}>
                    <FormLabel>Status icon:</FormLabel>
                    <IconField><SmallFolder /><GreyX /></IconField>
                  </FormRow>
                  <CheckRow $mt={22}>
                    <CheckItem><Box $on><TickMark /></Box>Show in Label column</CheckItem>
                  </CheckRow>
                  <CheckRow $mt={11}>
                    <CheckItem><Box />Pin to top</CheckItem>
                  </CheckRow>
                  <Note>
                    <NoteStar><Asterisk /></NoteStar>
                    Colors are
                    <NoteLink>overridden</NoteLink>
                  </Note>
                  <RedBox />
                </RightCol>
              </Content>
            </Main>
          </Body>
          <Footer>
            <SearchBox>
              Search Preferences
              <Magnifier />
            </SearchBox>
            <FootArrows>
              <BlackArrow />
              <BlackArrow down />
            </FootArrows>
            <Buttons>
              <Button $kind="primary">OK</Button>
              <Button>Cancel</Button>
              <Button $kind="disabled">Apply</Button>
            </Buttons>
          </Footer>
          <Grip><GripArt /></Grip>
        </Dialog>
      </Lister>
    </Page>
  );
}
